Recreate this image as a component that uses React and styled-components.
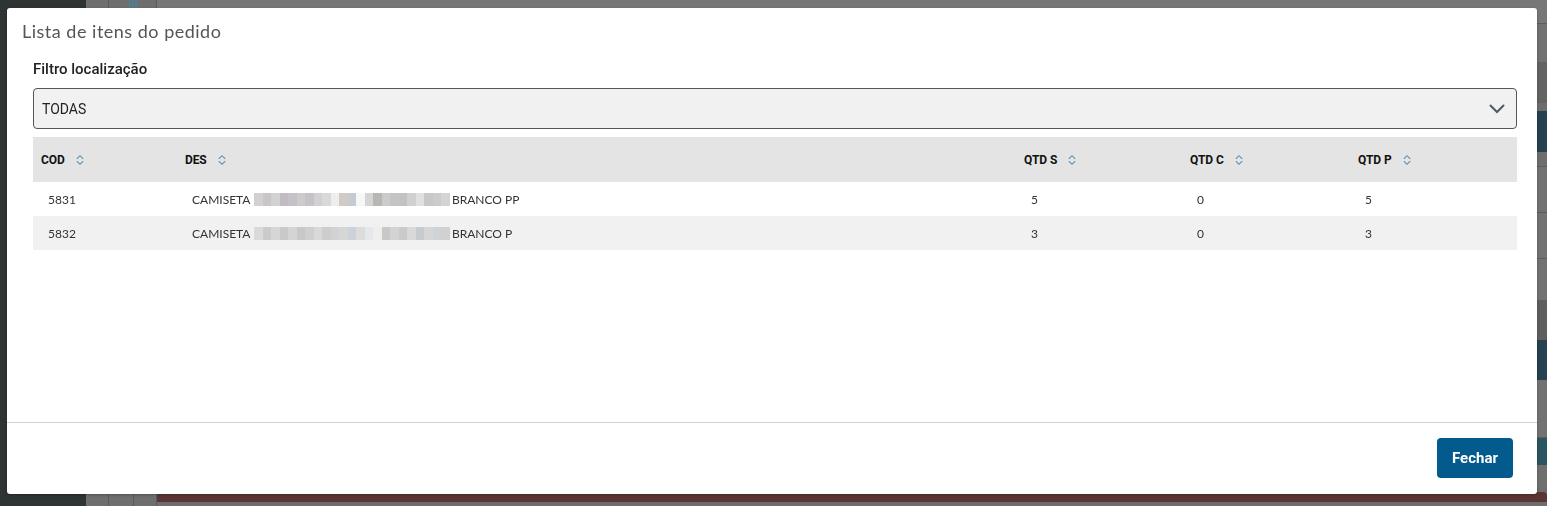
import React from 'react'
import styled, {createGlobalStyle} from 'styled-components'

const GlobalStyle = createGlobalStyle`
html, body {
    margin:0;
    padding:0;
    height:100%;
    overflow:hidden;
    background:#6d6d6d;
    font-family: Lato, 'Liberation Sans', sans-serif;
}
#root { height:100%; }
`

const columns = [
    {key:'cod', label:'COD'},
    {key:'des', label:'DES'},
    {key:'qs', label:'QTD S'},
    {key:'qc', label:'QTD C'},
    {key:'qp', label:'QTD P'},
]

const items = [
    {cod:'5831', pre:'CAMISETA', post:'BRANCO PP', qs:5, qc:0, qp:5,
     blur:['#d4d0d2','#c9c5c9','#d2d2d2','#c1bcc3','#c4c2c6','#cfcbcc','#c5c3c7','#d2d0d0','#d9d9d9','#eeeeee','#d1cbc5','#c6cbd1','#f7f7f7','#d5d5d5','#b7b7b4','#cbcbcb','#c4c4c4','#c2c2c2','#d0d0d0','#e0e0e0','#c8c8c8','#cccccc','#d4d4d4']},
    {cod:'5832', pre:'CAMISETA', post:'BRANCO P', qs:3, qc:0, qp:3,
     blur:['#dadada','#cbcbcb','#d6d6d6','#c9c9c9','#d4d4d4','#c8c8c8','#cfcfcf','#d9d9d9','#cdcdcd','#d2d2d2','#d6d6d6','#cdd2d8','#dcdcdc','#e5e7ea','#eeeeee','#c8c8c8','#d3d3d3','#cacaca','#d9d9d9','#c6cbd0','#d6d6d6','#cfd3d7','#d1d1d1']},
]

const backStrips = [
    {h:24, bg:'#777777', line:true},
    {h:38, bg:'#717171'},
    {h:41, bg:'#636363'},
    {h:8, bg:'#6d6d6d'},
    {h:41, bg:'#26414f'},
    {h:15, bg:'#6e6e6e', line:true},
    {h:46, bg:'#727272', line:true},
    {h:46, bg:'#727272', line:true},
    {h:41, bg:'#727272'},
    {h:40, bg:'#5f5f5f'},
    {h:40, bg:'#26414f'},
    {h:58, bg:'#727272', line:true},
    {h:27, bg:'#2b5560'},
    {h:23, bg:'#6f6f6f'},
]

function SortIcon() {
    return (
        <SortSvg viewBox="0 0 8 12" width="8" height="12">
            <path d="M1.2 4.5 L4 1.7 L6.8 4.5" />
            <path d="M1.2 7.5 L4 10.3 L6.8 7.5" />
        </SortSvg>
    )
}

export default function App() {
    return (
        <>
            <GlobalStyle/>
            <Page>
                <Sidebar/>
                <Rail $w={22}/>
                <Rail $w={24}/>
                <Rail $w={22}>
                    <MiniChart viewBox="0 0 23 8" width="23" height="8">
                        <rect x="0" y="6" width="2" height="2"/>
                        <rect x="5" y="0" width="2" height="8"/>
                        <rect x="8" y="0" width="2" height="8"/>
                        <rect x="11" y="0" width="2" height="8"/>
                        <rect x="15" y="6" width="2" height="2"/>
                    </MiniChart>
                </Rail>
                <Main>
                    {backStrips.map((s,i) => <Strip key={i} $h={s.h} $bg={s.bg} $line={s.line}/>)}
                    <Maroon/>
                </Main>
            </Page>

            <Modal role="dialog">
                <Title>Lista de itens do pedido</Title>
                <Body>
                    <Label>Filtro localização</Label>
                    <Select>
                        <span>TODAS</span>
                        <svg width="16" height="10" viewBox="0 0 16 10">
                            <path d="M1.5 1.5 L8 8 L14.5 1.5" fill="none" stroke="#4d5a60" strokeWidth="2" strokeLinecap="round"/>
                        </svg>
                    </Select>
                    <Table>
                        <HeadRow>
                            {columns.map(c =>
                                <HeadCell key={c.key}>{c.label}<SortIcon/></HeadCell>
                            )}
                        </HeadRow>
                        {items.map((item,i) =>
                            <Row key={item.cod} $odd={i % 2 === 1}>
                                <Cell>{item.cod}</Cell>
                                <Cell>
                                    {item.pre}
                                    <Blur>
                                        {item.blur.map((c,j) => <BlurCell key={j} style={{background:c}}/>)}
                                    </Blur>
                                    {item.post}
                                </Cell>
                                <Cell>{item.qs}</Cell>
                                <Cell>{item.qc}</Cell>
                                <Cell>{item.qp}</Cell>
                            </Row>
                        )}
                    </Table>
                </Body>
                <Footer>
                    <Button>Fechar</Button>
                </Footer>
            </Modal>
        </>
    )
}

const Page = styled.div`
display:flex;
height:100%;
`
const Sidebar = styled.div`
width:86px;
flex-shrink:0;
background:#2e3334;
`
const Rail = styled.div`
width:${p => p.$w}px;
flex-shrink:0;
border-right:1px solid #5a5a5a;
background:#6e6e6e;
`
const MiniChart = styled.svg`
display:block;
margin:0 0 0 -10px;
fill:#4f7e90;
`
const Main = styled.div`
flex:1;
display:flex;
flex-direction:column;
`
const Strip = styled.div`
height:${p => p.$h}px;
flex-shrink:0;
background:${p => p.$bg};
border-bottom:${p => p.$line ? '1px solid #5c5c5c' : 'none'};
box-sizing:border-box;
`
const Maroon = styled.div`
margin-top:4px;
height:10px;
background:#5a3535;
border-radius:4px 4px 0 0;
`

const Modal = styled.div`
position:fixed;
top:8px;
left:7px;
width:1530px;
height:486px;
background:#fff;
border-radius:3px;
box-shadow:0 1px 3px rgba(0,0,0,0.25);
display:flex;
flex-direction:column;
box-sizing:border-box;
`
const Title = styled.div`
padding:11px 15px 0 15px;
font-size:18px;
line-height:24px;
color:#555;
font-family: Lato, sans-serif;
letter-spacing:0.5px;
`
const Body = styled.div`
flex:1;
padding:16px 20px 0 26px;
display:flex;
flex-direction:column;
`
const Label = styled.div`
font-family: Roboto, sans-serif;
font-weight:500;
font-size:15px;
line-height:20px;
color:#222;
margin-bottom:9px;
`
const Select = styled.div`
height:41px;
box-sizing:border-box;
border:1px solid #555;
border-radius:4px;
background:#f1f1f1;
display:flex;
align-items:center;
justify-content:space-between;
padding:0 11px 0 8px;
font-family: Roboto, sans-serif;
font-size:14px;
color:#222;
`
const Table = styled.div`
margin-top:8px;
display:flex;
flex-direction:column;
`
const grid = `
display:grid;
grid-template-columns:144px 839px 166px 168px 1fr;
align-items:center;
`
const HeadRow = styled.div`
${grid}
height:45px;
background:#e4e4e4;
`
const HeadCell = styled.div`
display:flex;
align-items:center;
gap:11px;
padding-left:8px;
font-family: Roboto, sans-serif;
font-weight:700;
font-size:12px;
color:#111;
letter-spacing:-0.1px;
`
const SortSvg = styled.svg`
fill:none;
stroke:#6496b2;
stroke-width:1.1;
stroke-linecap:round;
`
const Row = styled.div`
${grid}
height:34px;
background:${p => p.$odd ? '#f1f1f1' : '#fff'};
`
const Cell = styled.div`
display:flex;
align-items:center;
padding-left:15px;
font-size:12px;
color:#333;
white-space:nowrap;
`
const Blur = styled.span`
display:inline-flex;
margin:0 2px 0 4px;
height:13px;
`
const BlurCell = styled.span`
width:8.5px;
height:13px;
`
const Footer = styled.div`
border-top:1px solid #d2d2d2;
display:flex;
justify-content:flex-end;
padding:15px 24px 16px;
`
const Button = styled.button`
width:76px;
height:40px;
border:none;
border-radius:4px;
background:#035a8c;
color:#fff;
font-family: Roboto, sans-serif;
font-weight:700;
font-size:15px;
cursor:pointer;
`
